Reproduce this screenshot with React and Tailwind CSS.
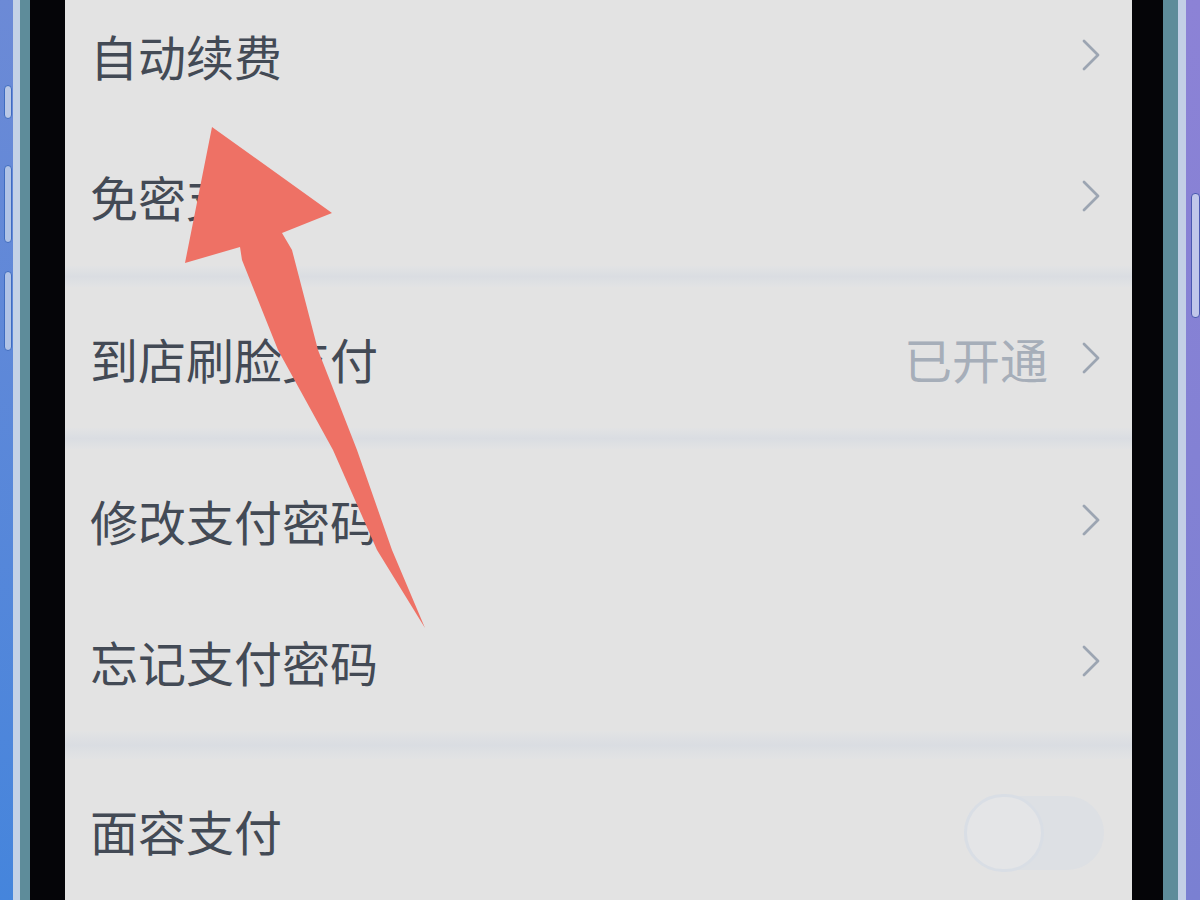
import React from "react";

const font = { fontFamily: '"Noto Sans CJK SC", "Noto Sans", sans-serif' };

function Chevron() {
  return (
    <svg width="22" height="34" viewBox="0 0 22 34" className="shrink-0">
      <polyline points="4,3 18,17 4,31" fill="none" stroke="#9ca5b2" strokeWidth="2.8" strokeLinecap="round" strokeLinejoin="round" />
    </svg>
  );
}

function Row({ label, value, toggle }) {
  return (
    <div className="h-[141px] flex items-center pl-[25px] pr-[30px] shrink-0">
      <div className="flex-1 text-[48px] leading-none text-[#434a55]" style={font}>{label}</div>
      {value && <div className="text-[48px] leading-none text-[#a6aeb9] mr-[32px]" style={font}>{value}</div>}
      {toggle ? (
        <div className="relative w-[140px] h-[74px] rounded-full bg-[#dde0e4] mr-[-2px] mt-[6px]">
          <div className="absolute left-0 top-[-2px] w-[80px] h-[78px] rounded-full bg-[#e4e5e7] border-[3px] border-[#d9dee5]" />
        </div>
      ) : (
        <Chevron />
      )}
    </div>
  );
}

function Sep({ h }) {
  return <div className={`${h} shrink-0 bg-gradient-to-b from-[#e2e3e4] via-[#dadde2] to-[#e2e3e4]`} />;
}

export default function App() {
  return (
    <div className="w-[1200px] h-[900px] overflow-hidden flex relative bg-[#e3e3e3]">
      {/* left frame */}
      <div className="w-[13px] h-full bg-gradient-to-b from-[#6c8ad6] to-[#4585dc] flex flex-col pl-[4px]">
        <div className="h-[85px]" />
        <div className="w-[8px] h-[34px] rounded-sm bg-[#b9c8e6] border border-[#3f6cc0]" />
        <div className="h-[46px]" />
        <div className="w-[8px] h-[78px] rounded-sm bg-[#b0c3e6] border border-[#3f6cc0]" />
        <div className="h-[28px]" />
        <div className="w-[8px] h-[80px] rounded-sm bg-[#b0c3e6] border border-[#3f6cc0]" />
      </div>
      <div className="w-[7px] h-full bg-[#c4d2e6]" />
      <div className="w-[10px] h-full bg-[#5e8c9a]" />
      <div className="w-[35px] h-full bg-[#050508]" />
      {/* screen */}
      <div className="flex-1 h-full bg-[#e3e3e3] flex flex-col">
        <div className="mt-[-16px] flex flex-col">
          <Row label="自动续费" />
          <Row label="免密支付" />
          <Sep h="h-[21px]" />
          <Row label="到店刷脸支付" value="已开通" />
          <Sep h="h-[21px]" />
          <Row label="修改支付密码" />
          <Row label="忘记支付密码" />
          <Sep h="h-[28px]" />
          <Row label="面容支付" toggle />
        </div>
      </div>
      <div className="w-[31px] h-full bg-[#050508]" />
      <div className="w-[15px] h-full bg-[#5e8c9a]" />
      <div className="w-[8px] h-full bg-[#c3cfe6]" />
      <div className="w-[14px] h-full bg-gradient-to-b from-[#8c82d6] to-[#7a80d2] flex flex-col items-end">
        <div className="h-[193px]" />
        <div className="w-[9px] h-[125px] rounded-sm bg-[#c0c6ea] border border-[#4a58b0]" />
      </div>
      {/* annotation arrow overlay */}
      <svg className="absolute left-0 top-0 pointer-events-none" width="1200" height="900" viewBox="0 0 1200 900">
        <polygon
          points="212,127 332,213 282,233 292,250 318,350 357,450 392,550 425,628 377,550 333,450 278,350 242,260 240,247 185,263"
          fill="#ee7165"
        />
      </svg>
    </div>
  );
}
